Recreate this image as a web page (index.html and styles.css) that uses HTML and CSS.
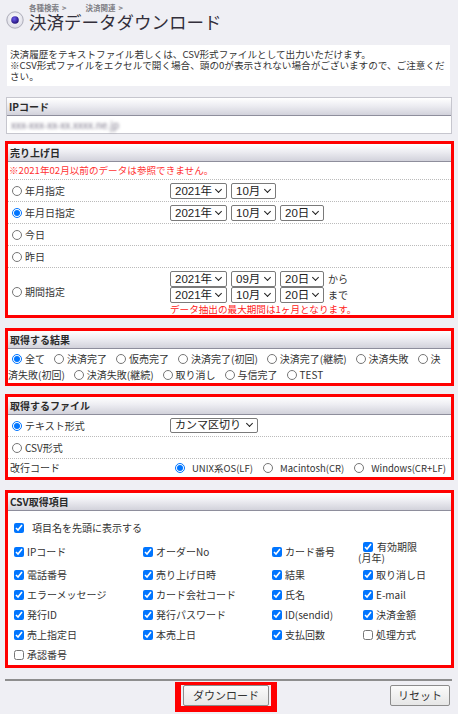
FILE: index.html
```html
<!DOCTYPE html>
<html lang="ja">
<head>
<meta charset="utf-8">
<title>決済データダウンロード</title>
<link rel="stylesheet" href="styles.css">
</head>
<body>
<header class="page-head">
  <svg class="head-icon" width="18" height="18" viewBox="0 0 18 18" aria-hidden="true">
    <defs>
      <radialGradient id="dot" cx="40%" cy="35%" r="70%">
        <stop offset="0" stop-color="#6d5cf0"/>
        <stop offset="1" stop-color="#1c0b6e"/>
      </radialGradient>
      <radialGradient id="ring" cx="50%" cy="40%" r="60%">
        <stop offset="0" stop-color="#ffffff"/>
        <stop offset="1" stop-color="#dcdce6"/>
      </radialGradient>
    </defs>
    <circle cx="9" cy="9" r="8.2" fill="url(#ring)" stroke="#a6a6b2" stroke-width="0.9"/>
    <circle cx="9" cy="9" r="3.8" fill="url(#dot)"/>
  </svg>
  <div class="head-text">
    <div class="crumb"><span>各種検索</span><span class="crumb-sep">&gt;</span><span>決済関連</span><span class="crumb-sep">&gt;</span></div>
    <h1 class="title">決済データダウンロード</h1>
  </div>
</header>

<div class="intro">決済履歴をテキストファイル若しくは、CSV形式ファイルとして出力いただけます。<br>※CSV形式ファイルをエクセルで開く場合、頭の0が表示されない場合がございますので、ご注意ください。</div>

<section class="panel panel-ip">
  <div class="panel-head">IPコード</div>
  <div class="ip-value"><span class="blur">xxx-xxx-xx-xx.xxxx.ne.jp</span></div>
</section>

<div class="mark mark-date">
  <section class="panel">
    <div class="panel-head">売り上げ日</div>
    <div class="note">※2021年02月以前のデータは参照できません。</div>
    <div class="row">
      <label class="opt"><input type="radio" name="date">年月指定</label>
      <div class="ctrl">
        <span class="selbox w-year"><select class="sel"><option>2021年</option></select></span>
        <span class="selbox w-mon"><select class="sel"><option>10月</option></select></span>
      </div>
    </div>
    <div class="row">
      <label class="opt"><input type="radio" name="date" checked>年月日指定</label>
      <div class="ctrl">
        <span class="selbox w-year"><select class="sel"><option>2021年</option></select></span>
        <span class="selbox w-mon"><select class="sel"><option>10月</option></select></span>
        <span class="selbox w-day"><select class="sel"><option>20日</option></select></span>
      </div>
    </div>
    <div class="row">
      <label class="opt"><input type="radio" name="date">今日</label>
      <div class="ctrl"></div>
    </div>
    <div class="row">
      <label class="opt"><input type="radio" name="date">昨日</label>
      <div class="ctrl"></div>
    </div>
    <div class="row row-period">
      <label class="opt"><input type="radio" name="date">期間指定</label>
      <div class="period">
        <div class="sel-line">
          <span class="selbox w-year"><select class="sel"><option>2021年</option></select></span>
          <span class="selbox w-mon"><select class="sel"><option>09月</option></select></span>
          <span class="selbox w-day"><select class="sel"><option>20日</option></select></span>
          <span>から</span>
        </div>
        <div class="sel-line">
          <span class="selbox w-year"><select class="sel"><option>2021年</option></select></span>
          <span class="selbox w-mon"><select class="sel"><option>10月</option></select></span>
          <span class="selbox w-day"><select class="sel"><option>20日</option></select></span>
          <span>まで</span>
        </div>
        <div class="limit">データ抽出の最大期間は1ヶ月となります。</div>
      </div>
    </div>
  </section>
</div>

<div class="mark mark-result">
  <section class="panel">
    <div class="panel-head">取得する結果</div>
    <div class="choices"><label class="choice"><input type="radio" name="res" checked>全て</label><label class="choice"><input type="radio" name="res">決済完了</label><label class="choice"><input type="radio" name="res">仮売完了</label><label class="choice"><input type="radio" name="res">決済完了(初回)</label><label class="choice"><input type="radio" name="res">決済完了(継続)</label><label class="choice"><input type="radio" name="res">決済失敗</label><label class="choice"><input type="radio" name="res">決済失敗(初回)</label><label class="choice"><input type="radio" name="res">決済失敗(継続)</label><label class="choice"><input type="radio" name="res">取り消し</label><label class="choice"><input type="radio" name="res">与信完了</label><label class="choice"><input type="radio" name="res">TEST</label></div>
  </section>
</div>

<div class="mark mark-file">
  <section class="panel">
    <div class="panel-head">取得するファイル</div>
    <div class="row">
      <label class="opt"><input type="radio" name="fmt" checked>テキスト形式</label>
      <div class="ctrl"><span class="selbox w-sep"><select class="sel sel-sep"><option>カンマ区切り</option></select></span></div>
    </div>
    <div class="row">
      <label class="opt"><input type="radio" name="fmt">CSV形式</label>
      <div class="ctrl"></div>
    </div>
    <div class="row row-eol">
      <div class="eol-label">改行コード</div>
      <div class="eol">
        <label class="eol-opt"><input type="radio" name="eol" checked>UNIX系OS(LF)</label>
        <label class="eol-opt"><input type="radio" name="eol">Macintosh(CR)</label>
        <label class="eol-opt"><input type="radio" name="eol">Windows(CR+LF)</label>
      </div>
    </div>
  </section>
</div>

<div class="mark mark-csv">
  <section class="panel">
    <div class="panel-head">CSV取得項目</div>
    <div class="csv-body">
      <label class="csv-headrow"><input type="checkbox" checked>項目名を先頭に表示する</label>
      <div class="csv-grid">
        <label class="chk"><input type="checkbox" checked>IPコード</label>
        <label class="chk"><input type="checkbox" checked>オーダーNo</label>
        <label class="chk"><input type="checkbox" checked>カード番号</label>
        <label class="chk-wrap"><input type="checkbox" checked>有効期限<br>(月年)</label>
        <label class="chk"><input type="checkbox" checked>電話番号</label>
        <label class="chk"><input type="checkbox" checked>売り上げ日時</label>
        <label class="chk"><input type="checkbox" checked>結果</label>
        <label class="chk chk-last"><input type="checkbox" checked>取り消し日</label>
        <label class="chk"><input type="checkbox" checked>エラーメッセージ</label>
        <label class="chk"><input type="checkbox" checked>カード会社コード</label>
        <label class="chk"><input type="checkbox" checked>氏名</label>
        <label class="chk chk-last"><input type="checkbox" checked>E-mail</label>
        <label class="chk"><input type="checkbox" checked>発行ID</label>
        <label class="chk"><input type="checkbox" checked>発行パスワード</label>
        <label class="chk"><input type="checkbox" checked>ID(sendid)</label>
        <label class="chk chk-last"><input type="checkbox" checked>決済金額</label>
        <label class="chk"><input type="checkbox" checked>売上指定日</label>
        <label class="chk"><input type="checkbox" checked>本売上日</label>
        <label class="chk"><input type="checkbox" checked>支払回数</label>
        <label class="chk chk-last"><input type="checkbox">処理方式</label>
        <label class="chk"><input type="checkbox">承認番号</label>
      </div>
    </div>
  </section>
</div>

<div class="actions">
  <div class="spacer"></div>
  <div class="dl-frame"><button type="button" class="btn">ダウンロード</button></div>
  <button type="button" class="btn btn-reset">リセット</button>
</div>
</body>
</html>
```

FILE: styles.css
```css
* { box-sizing: border-box; }
html, body { margin: 0; padding: 0; }
body {
  width: 458px;
  height: 714px;
  overflow: hidden;
  background: #efeff4;
  font-family: "Noto Sans CJK JP", "Noto Sans", sans-serif;
  font-size: 10px;
  line-height: 14px;
  color: #333;
}

/* header */
.page-head { display: flex; align-items: flex-start; padding: 3px 0 0 6px; }
.head-icon { flex: none; margin: 8px 5px 0 0; }
.crumb { font-size: 7.5px; line-height: 9px; color: #7e7e84; font-weight: bold; }
.crumb-sep { margin: 0 19px 0 3px; }
.title { margin: 0; font-size: 17.5px; line-height: 20px; font-weight: normal; color: #332f3b; }

.intro {
  margin: 13px 8px 0 7px;
  padding: 4px 3px;
  background: #fff;
  font-size: 9.6px;
  line-height: 11px;
}

/* panels */
.panel { background: #fff; }
.panel-ip { margin: 11px 6px 0 6px; border: 1px solid #c6c6ce; }
.panel-head {
  height: 18px;
  line-height: 17px;
  padding: 0 2px;
  font-weight: bold;
  font-size: 10px;
  color: #2a2a2a;
  background: linear-gradient(#ffffff, #ededf2 45%, #d2d2db);
  border-bottom: 1px solid #8e8e9c;
}
.ip-value { height: 17px; line-height: 17px; padding: 0 4px; }
.blur { filter: blur(1.4px); color: #7a7588; }

.mark { margin: 7px 4px 0 5px; border: 3px solid #f00; }
.mark-result { margin-top: 10px; }
.mark-file { margin-top: 8px; }
.mark-csv { margin-top: 10px; }

input[type="radio"], input[type="checkbox"] { width: 10px; height: 10px; }

.note {
  height: 18px;
  line-height: 17px;
  padding: 0 1px;
  color: #f33;
  font-size: 9.6px;
  border-bottom: 1px dotted #bbb;
}
.row {
  display: grid;
  grid-template-columns: 162px 1fr;
  align-items: center;
  height: 22px;
  border-bottom: 1px dotted #bbb;
}
.row-period { height: 47px; border-bottom: none; }
.row-eol { height: 18px; border-bottom: none; }
.opt { display: flex; align-items: center; }
.opt input { margin: 0 3px 0 4px; flex: none; }
.ctrl { display: flex; align-items: center; gap: 4px; }

/* custom select with chevron */
.selbox { position: relative; display: inline-block; height: 16px; flex: none; }
.selbox::after {
  content: "";
  position: absolute;
  right: 6px;
  top: 4px;
  width: 4px;
  height: 4px;
  border-right: 1.7px solid #1e1e1e;
  border-bottom: 1.7px solid #1e1e1e;
  transform: rotate(45deg);
  pointer-events: none;
}
.w-year { width: 57px; }
.w-mon { width: 45px; }
.w-day { width: 44px; }
.w-sep { width: 88px; height: 15px; }
.w-sep::after { top: 3px; }
.sel {
  -webkit-appearance: none;
  appearance: none;
  display: block;
  width: 100%;
  height: 100%;
  margin: 0;
  padding: 0 12px 0 4px;
  font-family: "Liberation Sans", "Noto Sans CJK JP", sans-serif;
  font-size: 11.5px;
  line-height: 14px;
  color: #222;
  background: #fff;
  border: 1px solid #7a7a7a;
  border-radius: 2px;
}
.sel-sep { font-size: 11px; padding-left: 4px; line-height: 13px; }

.period { align-self: start; padding-top: 3px; }
.sel-line { display: flex; align-items: center; gap: 4px; height: 16px; }
.limit { color: #f22; font-size: 9.6px; line-height: 12px; }

/* results */
.choices { padding: 2px 3px 0 0; line-height: 16px; }
.choice input { margin: 0 3px 0 9px; vertical-align: -1px; }
.choice:first-child input { margin-left: 4px; }

/* file */
.eol-label { padding-left: 2px; }
.eol { display: flex; align-items: center; font-size: 9.5px; }
.eol-opt { display: flex; align-items: center; }
.eol-opt input { margin: 0 7px 0 10px; flex: none; }
.eol-opt:first-child input { margin-left: 5px; }

/* csv */
.csv-body { padding: 6px 2px 0; }
.csv-headrow { display: flex; align-items: center; height: 22px; }
.csv-headrow input { margin: 0 8px 0 4px; flex: none; }
.csv-grid {
  display: grid;
  grid-template-columns: 129px 129px 90px 1fr;
  grid-template-rows: 26px;
  grid-auto-rows: 20px;
  align-items: center;
}
.chk { display: flex; align-items: center; line-height: 12px; white-space: nowrap; }
.chk input { margin: 0 3px 0 4px; flex: none; }
.chk-last input { margin-left: 5px; }
.chk-wrap { display: block; line-height: 11px; }
.chk-wrap input { margin: 0 4px 0 5px; vertical-align: -1px; }

/* actions */
.actions {
  margin: 11px 6px 0 5px;
  padding-top: 1px;
  border-top: 2px solid #8e8e8e;
  display: grid;
  grid-template-columns: 170px auto 1fr;
  align-items: start;
}
.dl-frame {
  border: 3px solid #f00;
  border-left-width: 6px;
  border-right-width: 6px;
  border-bottom-width: 6px;
  padding: 0 2px;
}
.btn {
  display: block;
  height: 21px;
  padding: 0 9px;
  font-family: "Noto Sans CJK JP", sans-serif;
  font-size: 11px;
  line-height: 19px;
  color: #333;
  background: linear-gradient(#fbfbfb, #e6e6e6);
  border: 1px solid #8c8c8c;
  border-radius: 2px;
}
.btn-reset { justify-self: end; margin: 3px 2px 0 0; padding: 0 7px; }
```
